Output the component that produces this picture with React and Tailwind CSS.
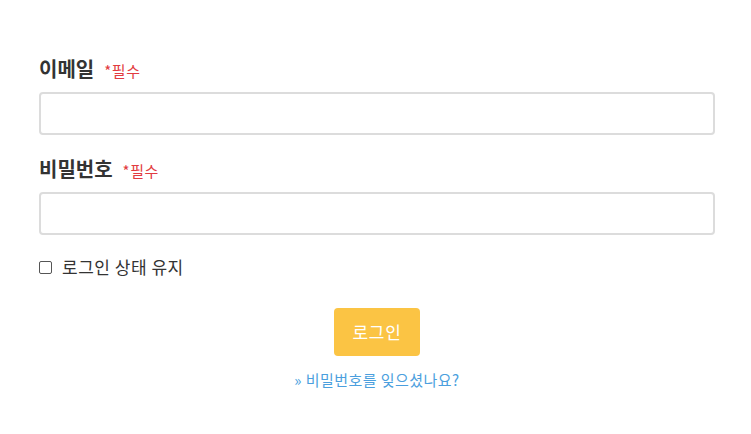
export default function App() {
  return (
    <div
      className="w-[751px] h-[434px] bg-white text-[#333]"
      style={{ fontFamily: '"Noto Sans CJK KR", "Noto Sans", sans-serif' }}
    >
      <form className="ml-[39px] w-[676px] pt-[55px]">
        <div className="flex items-center gap-[10px] h-[28px]">
          <label className="text-[20px] font-bold leading-none">이메일</label>
          <span className="text-[15px] text-[#e23b40] leading-none mt-[3px] tracking-[0.04em]">*필수</span>
        </div>
        <input
          type="email"
          className="mt-[9px] block w-full h-[43px] rounded-[4px] border-2 border-[#dcdcdc] bg-white"
        />

        <div className="flex items-center gap-[10px] h-[28px] mt-[20px]">
          <label className="text-[20px] font-bold leading-none">비밀번호</label>
          <span className="text-[15px] text-[#e23b40] leading-none mt-[3px] tracking-[0.04em]">*필수</span>
        </div>
        <input
          type="password"
          className="mt-[9px] block w-full h-[43px] rounded-[4px] border-2 border-[#dcdcdc] bg-white"
        />

        <label className="flex items-center mt-[21px] h-[22px] text-[17px] tracking-[0.03em]">
          <span className="w-[13px] h-[13px] border border-[#555] rounded-[2px] bg-white" />
          <span className="ml-[10px]">로그인 상태 유지</span>
        </label>

        <div className="flex flex-col items-center mt-[30px]">
          <button
            type="button"
            className="w-[86px] h-[48px] rounded-[4px] bg-[#fbc444] text-white text-[17px] tracking-[0.04em]"
          >
            로그인
          </button>
          <a className="mt-[14px] text-[15px] text-[#4b9fde] leading-[20px] tracking-[0.03em]">
            » 비밀번호를 잊으셨나요?
          </a>
        </div>
      </form>
    </div>
  );
}
